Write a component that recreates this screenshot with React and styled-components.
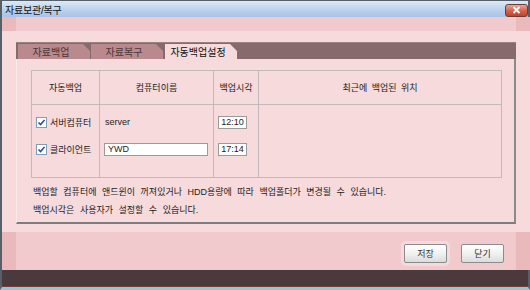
import React from 'react';
import styled, { createGlobalStyle } from 'styled-components';

const GlobalStyle = createGlobalStyle`
  html, body {
    margin: 0;
    padding: 0;
    overflow: hidden;
    background: #ffffff;
  }
  * {
    box-sizing: border-box;
  }
`;

const font = `"Liberation Sans", "Noto Sans CJK KR", sans-serif`;

const Window = styled.div`
  width: 530px;
  height: 290px;
  display: flex;
  flex-direction: column;
  border: 2px solid #55606b;
  border-top-width: 1px;
  border-bottom: 3px solid #7fd0d8;
  font-family: ${font};
  font-size: 9px;
  color: #222;
  background: #f6dadc;
`;

const TitleBar = styled.div`
  height: 16px;
  flex: none;
  display: flex;
  align-items: center;
  justify-content: space-between;
  padding: 0 0 0 3px;
  background: linear-gradient(#dce8f6, #b9d0ec 60%, #a9c4e5);
`;

const Title = styled.span`
  font-size: 10px;
  color: #111;
  letter-spacing: -0.2px;
`;

const CloseButton = styled.button`
  width: 23px;
  height: 13px;
  margin-top: 2px;
  padding: 0;
  border: 1px solid #6e3c36;
  border-radius: 3px;
  background: linear-gradient(#eaa596, #d6654f 50%, #c2412b);
  display: flex;
  align-items: center;
  justify-content: center;
`;

const Body = styled.div`
  flex: 1;
  display: grid;
  grid-template-columns: 14px 1fr 14px;
  grid-template-rows: 14px 1fr 38px;
`;

const tones = {
  corner: '#eab9bc',
  edge: '#f0cacd',
  light: '#f6dadc',
};

const Cell = styled.div`
  background: ${(p) => tones[p.$tone]};
`;

const Content = styled.div`
  padding: 11px 0 8px;
  display: flex;
  flex-direction: column;
`;

const TabBar = styled.div`
  height: 17px;
  display: flex;
  align-items: flex-end;
  gap: 1px;
  padding-left: 2px;
  background: #876a6b;
  border-top: 1px solid #9a8081;
`;

const Tab = styled.div`
  width: 72px;
  height: 15px;
  display: flex;
  align-items: center;
  justify-content: center;
  padding-right: 6px;
  font-size: 10px;
  color: ${(p) => (p.$active ? '#111' : '#4a3638')};
  background: ${(p) => (p.$active ? '#f6dadc' : '#b8898d')};
  clip-path: polygon(0 0, calc(100% - 7px) 0, 100% 7px, 100% 100%, 0 100%);
  margin-left: ${(p) => (p.$active ? '1px' : '0')};
`;

const Panel = styled.div`
  flex: 1;
  padding: 11px 12px 0 14px;
  border-left: 1px solid #fbeaeb;
  border-right: 2px solid #8a8a8a;
  border-bottom: 2px solid #7d7d7d;
`;

const Table = styled.table`
  width: 471px;
  border-collapse: collapse;
  table-layout: fixed;
  border: 1px solid #c2b9ba;
`;

const Head = styled.th`
  height: 34px;
  font-weight: normal;
  text-align: center;
  font-size: 9px;
  border: 1px solid #c2b9ba;
  color: #1a1a1a;
  word-spacing: 2px;
`;

const Td = styled.td`
  height: ${(p) => p.$h}px;
  vertical-align: ${(p) => (p.$top ? 'top' : 'bottom')};
  padding: 0 0 6px 4px;
  border-left: 1px solid #c2b9ba;
  border-right: 1px solid #c2b9ba;
`;

const Check = styled.label`
  display: flex;
  align-items: center;
  gap: 3px;
  white-space: nowrap;
`;

const Box = styled.span`
  width: 11px;
  height: 11px;
  flex: none;
  border: 1px solid #7f9db9;
  background: #fff;
  display: flex;
  align-items: center;
  justify-content: center;
`;

const Field = styled.div`
  width: ${(p) => p.$w}px;
  height: 13px;
  line-height: 11px;
  border: 1px solid #9a9a9a;
  background: #fff;
  padding: ${(p) => (p.$center ? '0' : '0 3px')};
  font-size: 9px;
  text-align: ${(p) => (p.$center ? 'center' : 'left')};
  color: #222;
  white-space: nowrap;
`;

const Plain = styled.span`
  display: block;
  line-height: 13px;
  padding-left: 1px;
`;

const Notes = styled.div`
  padding: 5px 0 0 2px;
  line-height: 18px;
  word-spacing: 3px;
`;

const Footer = styled.div`
  display: flex;
  justify-content: flex-end;
  align-items: flex-start;
  gap: 14px;
  padding: 12px 12px 0 0;
  background: #f0cacd;
`;

const Button = styled.button`
  width: 43px;
  height: 19px;
  padding: 0;
  font-family: ${font};
  font-size: 9px;
  color: #333;
  border: 1px solid #8b8b8b;
  border-radius: 2px;
  background: linear-gradient(#ffffff, #f1f1f1 50%, #dcdcdc);
  box-shadow: ${(p) => (p.$focused ? '0 0 0 3px rgba(255,255,255,0.3)' : 'none')};
`;

const StatusStrip = styled.div`
  height: 17px;
  flex: none;
  background: #4a3a3c;
  border-bottom: 1px solid #7a3c3c;
`;

function CheckMark() {
  return (
    <svg width="9" height="9" viewBox="0 0 9 9">
      <path d="M1.5 4.5 L3.6 6.6 L7.5 2" fill="none" stroke="#2a4fa8" strokeWidth="1.6" />
    </svg>
  );
}

function CloseIcon() {
  return (
    <svg width="9" height="8" viewBox="0 0 9 8">
      <path d="M1.5 1 L7.5 7 M7.5 1 L1.5 7" stroke="#fff" strokeWidth="1.8" />
    </svg>
  );
}

const rows = [
  { label: '서버컴퓨터', name: 'server', editable: false, time: '12:10', h: 30 },
  { label: '클라이언트', name: 'YWD', editable: true, time: '17:14', h: 27 },
];

export default function App() {
  return (
    <>
      <GlobalStyle />
      <Window>
        <TitleBar>
          <Title>자료보관/복구</Title>
          <CloseButton aria-label="닫기">
            <CloseIcon />
          </CloseButton>
        </TitleBar>
        <Body>
          <Cell $tone="corner" />
          <Cell $tone="edge" />
          <Cell $tone="corner" />
          <Cell $tone="light" />
          <Content>
            <TabBar>
              <Tab>자료백업</Tab>
              <Tab>자료복구</Tab>
              <Tab $active>자동백업설정</Tab>
            </TabBar>
            <Panel>
              <Table>
                <colgroup>
                  <col style={{ width: 68 }} />
                  <col style={{ width: 114 }} />
                  <col style={{ width: 45 }} />
                  <col />
                </colgroup>
                <thead>
                  <tr>
                    <Head>자동백업</Head>
                    <Head>컴퓨터이름</Head>
                    <Head>백업시각</Head>
                    <Head>최근에 백업된 위치</Head>
                  </tr>
                </thead>
                <tbody>
                  {rows.map((r, i) => (
                    <tr key={r.label}>
                      <Td $h={r.h}>
                        <Check>
                          <Box>
                            <CheckMark />
                          </Box>
                          {r.label}
                        </Check>
                      </Td>
                      <Td $h={r.h}>
                        {r.editable ? <Field $w={104}>{r.name}</Field> : <Plain>{r.name}</Plain>}
                      </Td>
                      <Td $h={r.h}>
                        <Field $w={29} $center>
                          {r.time}
                        </Field>
                      </Td>
                      {i === 0 && <Td $h={r.h} $top rowSpan={3} />}
                    </tr>
                  ))}
                  <tr>
                    <Td $h={16} />
                    <Td $h={16} />
                    <Td $h={16} />
                  </tr>
                </tbody>
              </Table>
              <Notes>
                <div>백업할 컴퓨터에 앤드윈이 꺼져있거나 HDD용량에 따라 백업폴더가 변경될 수 있습니다.</div>
                <div>백업시각은 사용자가 설정할 수 있습니다.</div>
              </Notes>
            </Panel>
          </Content>
          <Cell $tone="light" />
          <Cell $tone="corner" />
          <Footer>
            <Button $focused>저장</Button>
            <Button>닫기</Button>
          </Footer>
          <Cell $tone="corner" />
        </Body>
        <StatusStrip />
      </Window>
    </>
  );
}
